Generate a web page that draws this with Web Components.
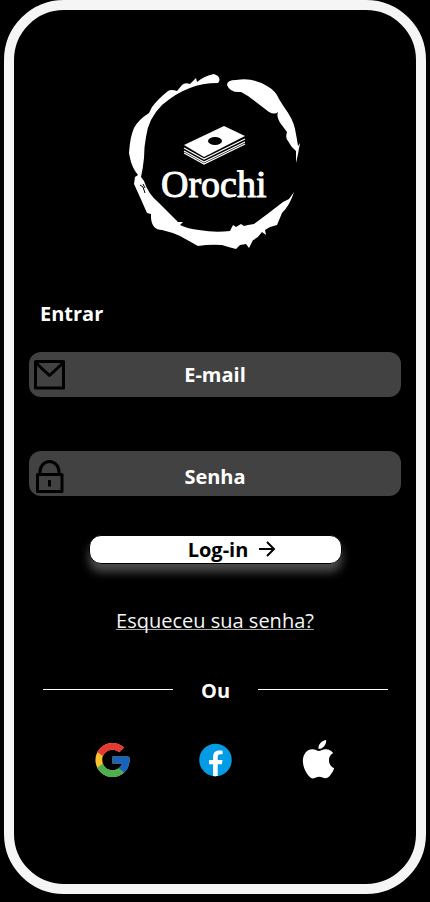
<!DOCTYPE html>
<html lang="pt-BR">
<head>
<meta charset="utf-8">
<meta name="viewport" content="width=device-width, initial-scale=1">
<title>Orochi</title>
<style>
body { margin: 0; background: #000; color: #fff; font: 20px/28px "Open Sans", "Noto Sans", sans-serif; }
</style>
</head>
<body>
<phone-frame>
  <orochi-logo></orochi-logo>
  <login-form></login-form>
  <or-divider>Ou</or-divider>
  <social-links></social-links>
</phone-frame>

<script>
const define = (name, html) => {
  const template = document.createElement('template');
  template.innerHTML = html;
  customElements.define(name, class extends HTMLElement {
    constructor() {
      super();
      this.attachShadow({ mode: 'open' }).append(template.content.cloneNode(true));
    }
  });
};

define('orochi-logo', `
<style>
:host { display: block; }
svg { display: block; width: 180px; height: 180px; margin: 0 auto; }
text { font-family: "Liberation Serif", serif; font-size: 38px; }
</style>
<svg viewBox="125 72 180 180" fill="#fff" role="img" aria-label="Orochi">
  <path d="M130 158 L129 153 Q130 137 134 128 Q138 120 149 113 L152 107 Q158 99 168 91 Q171 89 177 91 L182 85 Q185 82 190 84 L194 80 L196 78 L197 82 Q204 76 214 74 L218 76 Q221 80 218 83 Q202 83 190 88 Q176 93 162 105 Q148 119 146 137 Q144 147 144 158 Q143 168 141 177 L144 181 Q148 194 159 203 L178 222 L183 222 L180 225 Q188 229 199 230 Q215 233 230 231 L233 225 L236 227 L241 224 L244 226 L248 225 L254 224 Q269 213 283 202 L289 199 L294 192 Q290 205 282 213 L277 225 L270 227 L265 230 L266 235 L262 232 Q258 238 253 240 L249 248 L246 244 L240 245 L236 249 Q228 247 222 245 Q210 244 198 246 L180 236 Q171 232 162 230 Q152 230 151 218 L151 214 L147 213 Q140 197 134 184 L135 177 L138 175 Q132 168 130 158Z"/>
  <path d="M227 85 Q227 80 236 80 Q253 77 267 86 Q276 91 279 99 L284 107 Q293 119 295 129 Q297 139 298 146 L300 143 L298 154 L296 163 L296 151 Q291 147 288 141 Q285 138 287 132 L281 124 Q276 117 278 112 Q275 115 269 112 L248 96 L241 92 Q230 93 227 85Z"/>
  <path d="M140 185l3 2 2 6M143 184l2 4" fill="none" stroke="#000"/>
  <path d="M184 145 L224 126 L245 136 L204 157Z"/>
  <ellipse cx="215" cy="141" rx="7" ry="4" fill="#000"/>
  <path d="M184 148l20 11 41-20M184 151l20 11 41-20M184 153l20 11 41-20" fill="none" stroke="#fff" stroke-width="1.2"/>
  <text x="161" y="197" stroke="#fff" stroke-width="1" stroke-linejoin="round">Orochi</text>
</svg>`);

define('phone-frame', `
<style>
:host { display: block; box-sizing: border-box; margin: 0 4px 8px; min-height: calc(100vh - 8px); border: 10px solid #f5f5f5; border-radius: 60px; padding: 62px 15px 80px; }
</style>
<slot></slot>`);

define('mail-icon', `
<style>:host, svg { display: block; }</style>
<svg width="32" height="32" viewBox="0 0 32 32" fill="none" stroke="#000" stroke-width="3" stroke-linejoin="round" aria-hidden="true"><path d="M2.500 2.500h28v26.500h-28zM3 4l13.500 12.500 13.500-12.500"/></svg>`);

define('lock-icon', `
<style>:host, svg { display: block; }</style>
<svg width="32" height="36" viewBox="0 0 32 36" fill="none" stroke="#000" stroke-width="3" stroke-linejoin="round" aria-hidden="true"><path d="M4.500 14.500h24.500v17h-24.500zM7 14v-2a9.500 10.500 0 0 1 19 0v2M16.500 20v6.500"/></svg>`);

define('login-form', `
<style>
:host { display: block; padding-top: 48px; }
h1 { margin: 0 11px 24px; font: inherit; font-weight: 700; }
.field { display: flex; align-items: center; box-sizing: border-box; height: 45px; padding: 0 4px; border-radius: 12px; background: #424242; }
.field + .field { margin-top: 54px; align-items: flex-end; }
label { flex: none; width: 32px; }
input { flex: 1; min-width: 0; box-sizing: border-box; height: 45px; margin: 0; padding: 0 32px 0 0; border: 0; background: none; color: #fff; font: inherit; font-weight: 700; text-align: center; outline: 0; }
.field + .field input { padding-top: 5px; }
input::placeholder { color: #fff; opacity: 1; }
button { display: flex; align-items: center; justify-content: center; gap: 8px; width: calc(100% - 119px); height: 29px; margin: 39px auto 0; padding: 0 0 0 36px; border: 1px solid #000; border-radius: 12px; background: #fff; color: #000; font: inherit; font-weight: 700; box-shadow: 0 8px 10px rgba(255,255,255,.3); }
p { margin: 43px 0 0; text-align: center; }
a { color: #f5f5f5; text-decoration-thickness: 1px; text-decoration-color: #aaa; text-decoration-skip-ink: none; }
</style>
<form>
  <h1>Entrar</h1>
  <div class="field"><label for="email"><mail-icon></mail-icon></label><input id="email" type="email" placeholder="E-mail" aria-label="E-mail"></div>
  <div class="field"><label for="senha"><lock-icon></lock-icon></label><input id="senha" type="password" placeholder="Senha" aria-label="Senha"></div>
  <button type="submit">Log-in <svg width="22" height="18" viewBox="0 0 22 18" fill="none" stroke="#000" stroke-width="2" aria-hidden="true"><path d="M3 8h15M11 1l7 7-7 7"/></svg></button>
  <p><a href="#senha">Esqueceu sua senha?</a></p>
</form>`);

define('or-divider', `
<style>
:host { display: flex; align-items: center; gap: 28px; margin: 42px 13px 0 14px; font-weight: 700; }
:host::before, :host::after { content: ""; flex: 1; height: 1px; margin-bottom: 4px; background: #fff; }
</style>
<slot></slot>`);

define('social-links', `
<style>
:host { display: flex; justify-content: space-between; align-items: center; margin: 34px 62px 0; }
a { display: flex; justify-content: center; width: 42px; }
svg { display: block; }
</style>
<a href="#google" aria-label="Google"><svg width="41" height="42" viewBox="0 0 48 48">
  <path fill="#fbc02d" d="M43.611 20.083H42V20H24v8h11.303c-1.649 4.657-6.080 8-11.303 8c-6.627 0-12-5.373-12-12c0-6.627 5.373-12 12-12c3.059 0 5.842 1.154 7.961 3.039l5.657-5.657C34.046 6.053 29.268 4 24 4C12.955 4 4 12.955 4 24c0 11.045 8.955 20 20 20c11.045 0 20-8.955 20-20C44 22.659 43.862 21.350 43.611 20.083z"/>
  <path fill="#e53935" d="M6.306 14.691l6.571 4.819C14.655 15.108 18.961 12 24 12c3.059 0 5.842 1.154 7.961 3.039l5.657-5.657C34.046 6.053 29.268 4 24 4C16.318 4 9.656 8.337 6.306 14.691z"/>
  <path fill="#4caf50" d="M24 44c5.166 0 9.860-1.977 13.409-5.192l-6.190-5.238C29.211 35.091 26.715 36 24 36c-5.202 0-9.619-3.317-11.283-7.946l-6.522 5.025C9.505 39.556 16.227 44 24 44z"/>
  <path fill="#1565c0" d="M43.611 20.083H42V20H24v8h11.303c-.792 2.237-2.231 4.166-4.087 5.571l6.190 5.238C36.971 39.205 44 34 44 24C44 22.659 43.862 21.350 43.611 20.083z"/>
</svg></a>
<a href="#facebook" aria-label="Facebook"><svg width="41" height="42" viewBox="0 0 48 48">
  <circle cx="24" cy="24" r="19" fill="#039be5"/>
  <path fill="#fff" d="M26.572 29.036h4.917l.772-4.995h-5.690v-2.730c0-2.075.678-3.915 2.619-3.915h3.119v-4.359c-.548-.074-1.707-.236-3.897-.236-4.573 0-7.254 2.415-7.254 7.917v3.323h-4.701v4.995h4.701v13.729C22.089 42.905 23.032 43 24 43c.875 0 1.729-.080 2.572-.194z"/>
</svg></a>
<a href="#apple" aria-label="Apple"><svg width="39" height="40" viewBox="0 0 24 25" fill="#fff">
  <path d="M12.152 6.896c-.948 0-2.415-1.078-3.960-1.040-2.040.027-3.910 1.183-4.961 3.014-2.117 3.675-.546 9.103 1.519 12.090 1.013 1.454 2.208 3.090 3.792 3.039 1.520-.065 2.090-.987 3.935-.987 1.831 0 2.350.987 3.960.948 1.637-.026 2.676-1.480 3.676-2.948 1.156-1.688 1.636-3.325 1.662-3.415-.039-.013-3.182-1.221-3.220-4.857-.026-3.040 2.480-4.494 2.597-4.559-1.429-2.090-3.623-2.324-4.390-2.376-2-.156-3.675 1.090-4.610 1.090zM15.530 3.830c.843-1.012 1.400-2.427 1.245-3.830-1.207.052-2.662.805-3.532 1.818-.780.896-1.454 2.338-1.273 3.714 1.338.104 2.715-.688 3.559-1.701"/>
</svg></a>`);
</script>
</body>
</html>
